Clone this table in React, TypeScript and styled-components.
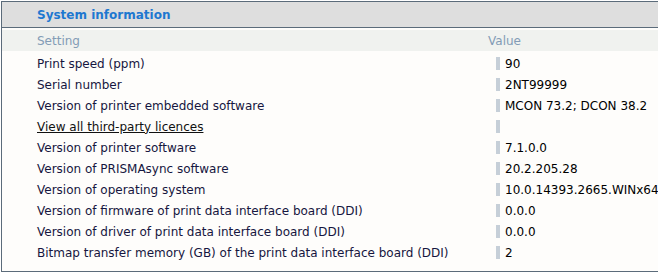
import React, { FC } from 'react';
import styled, { createGlobalStyle } from 'styled-components';

const GlobalStyle = createGlobalStyle`
    html, body {
        margin: 0;
        padding: 0;
        background: #ffffff;
    }
`;

const Panel = styled.div`
    width: 658px;
    height: 274px;
    box-sizing: border-box;
    padding-top: 1px;
    font-family: 'DejaVu Sans', Verdana, sans-serif;
    font-size: 12px;
`;

const Frame = styled.div`
    border-top: 1px solid #5b6b7a;
    border-left: 1px solid #5b6b7a;
    border-bottom: 1px solid #5b6b7a;
    margin-left: 1px;
    height: 271px;
    box-sizing: border-box;
    background: #fefdfb;
`;

const Title = styled.div`
    height: 25px;
    background: #dedede;
    border-bottom: 1px solid #5b6b7a;
    display: flex;
    align-items: center;
    padding-left: 35px;
    color: #1e78d0;
    font-weight: bold;
    font-size: 12px;
`;

const Grid = styled.div`
    display: grid;
    grid-template-columns: 486px 1fr;
    padding-top: 2px;
`;

const HeadCell = styled.div<{ first?: boolean }>`
    height: 21px;
    margin-bottom: 2px;
    background: #f0f2ef;
    color: #839cb6;
    display: flex;
    align-items: center;
    padding-left: ${(p) => (p.first ? '35px' : '0')};
`;

const Label = styled.div`
    height: 21px;
    display: flex;
    align-items: center;
    padding-left: 35px;
    color: #161640;
    white-space: nowrap;
`;

const Link = styled.a`
    color: #111111;
    text-decoration: underline;
`;

const Value = styled.div`
    height: 21px;
    display: flex;
    align-items: center;
    padding-left: 8px;
    color: #000000;
    white-space: nowrap;
    &::before {
        content: '';
        width: 4px;
        height: 13px;
        background: #c6cfd8;
        margin-right: 5px;
    }
`;

type Row = { label: string; value: string; link?: boolean };

const rows: Row[] = [
    { label: 'Print speed (ppm)', value: '90' },
    { label: 'Serial number', value: '2NT99999' },
    { label: 'Version of printer embedded software', value: 'MCON 73.2; DCON 38.2' },
    { label: 'View all third-party licences', value: '', link: true },
    { label: 'Version of printer software', value: '7.1.0.0' },
    { label: 'Version of PRISMAsync software', value: '20.2.205.28' },
    { label: 'Version of operating system', value: '10.0.14393.2665.WINx64' },
    { label: 'Version of firmware of print data interface board (DDI)', value: '0.0.0' },
    { label: 'Version of driver of print data interface board (DDI)', value: '0.0.0' },
    { label: 'Bitmap transfer memory (GB) of the print data interface board (DDI)', value: '2' },
];

const App: FC = () => (
    <>
        <GlobalStyle />
        <Panel>
            <Frame>
                <Title>System information</Title>
                <Grid>
                    <HeadCell first>Setting</HeadCell>
                    <HeadCell>Value</HeadCell>
                    {rows.map((row) => (
                        <React.Fragment key={row.label}>
                            <Label>{row.link ? <Link href="#">{row.label}</Link> : row.label}</Label>
                            <Value>{row.value}</Value>
                        </React.Fragment>
                    ))}
                </Grid>
            </Frame>
        </Panel>
    </>
);

export default App;
